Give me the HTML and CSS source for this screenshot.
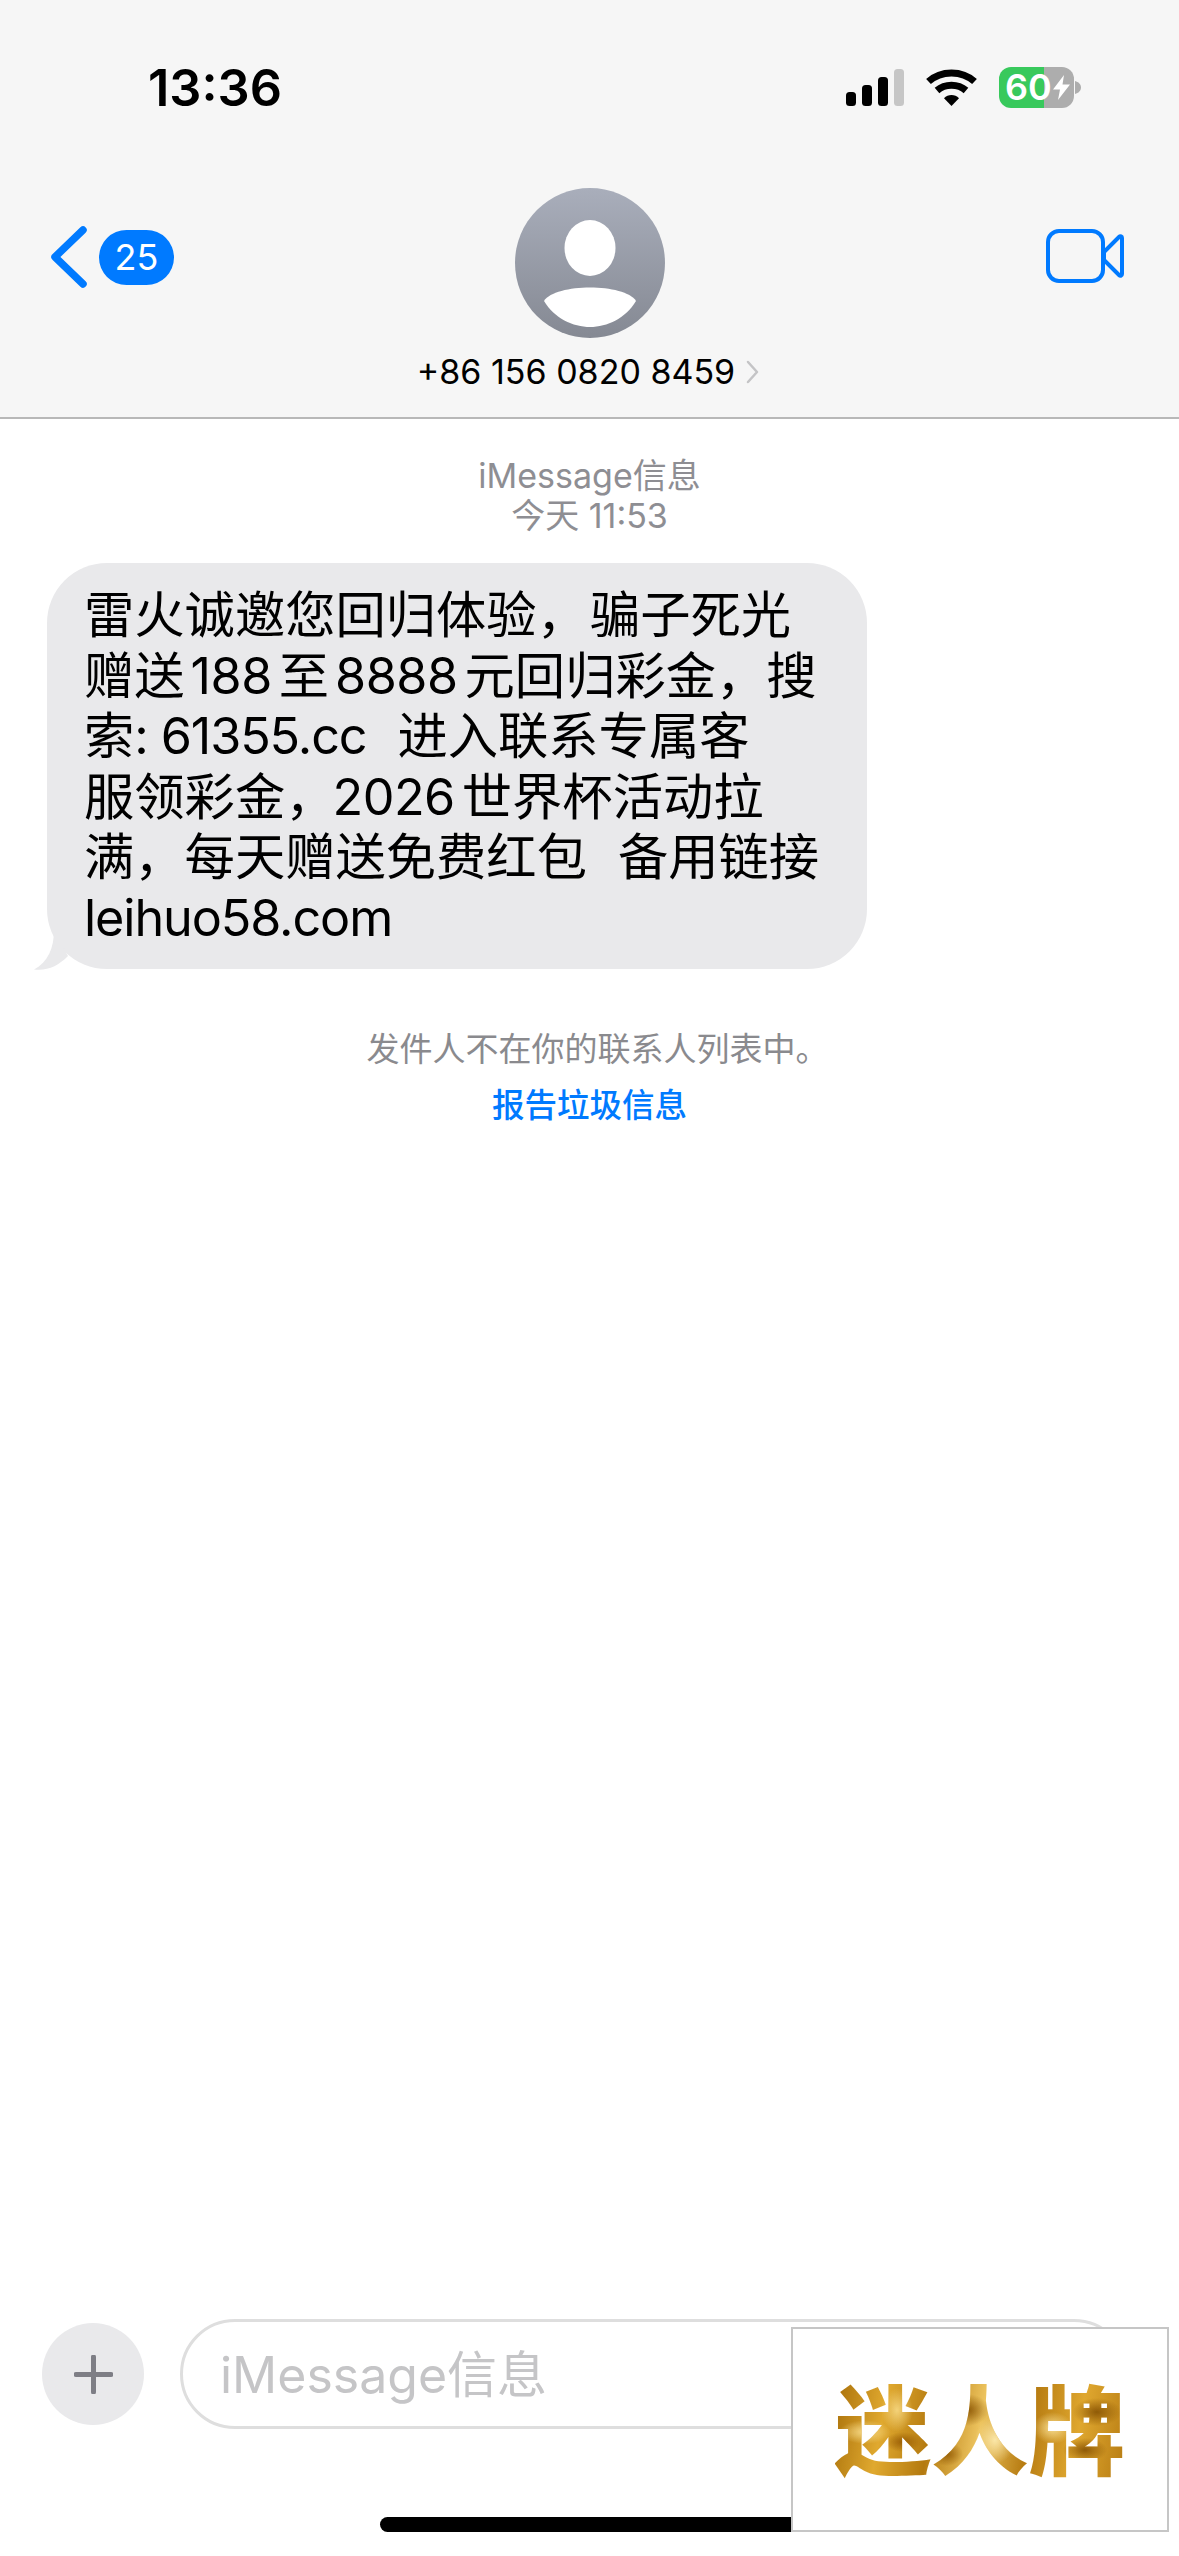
FILE: index.html
```html
<!DOCTYPE html>
<html lang="zh-CN">
<head>
<meta charset="utf-8">
<title>iMessage</title>
<link rel="stylesheet" href="styles.css">
</head>
<body>
<div class="screen">
  <header class="top">
    <div class="status">
      <span class="time">13:36</span>
      <div class="status-icons">
        <svg class="signal" width="58" height="37" viewBox="0 0 58 37">
          <rect x="0" y="23" width="10" height="14" rx="3.5" fill="#000"/>
          <rect x="16" y="16" width="10" height="21" rx="3.5" fill="#000"/>
          <rect x="32" y="8" width="10" height="29" rx="3.5" fill="#000"/>
          <rect x="48" y="0" width="10" height="37" rx="3.5" fill="#c6c6c6"/>
        </svg>
        <svg class="wifi" width="51" height="37" viewBox="0 0 51 37">
          <path d="M2.5 12.5C15 1 36 1 48.5 12.5" fill="none" stroke="#000" stroke-width="7"/>
          <path d="M11 21.5C19 14.5 32 14.5 40 21.5" fill="none" stroke="#000" stroke-width="7"/>
          <path d="M25.5 37L18 29.2C22 25 29 25 33 29.2Z" fill="#000"/>
        </svg>
        <div class="battery">
          <div class="battery-body">
            <span class="battery-num">60</span>
            <svg class="bolt" width="17" height="25" viewBox="0 0 17 25">
              <path d="M11 0L0 14.500H7L5 25L17 9.500H9.500Z" fill="#fff"/>
            </svg>
          </div>
          <svg class="nub" width="6" height="13" viewBox="0 0 6 13">
            <path d="M0 0C3.500 .8 6 3.500 6 6.500S3.500 12.200 0 13Z" fill="#adadad"/>
          </svg>
        </div>
      </div>
    </div>
    <div class="nav">
      <div class="back">
        <svg width="38" height="64" viewBox="0 0 38 64">
          <path d="M33 5L5 32L33 59" fill="none" stroke="#007aff" stroke-width="7.500" stroke-linecap="round" stroke-linejoin="round"/>
        </svg>
        <span class="badge">25</span>
      </div>
      <div class="contact">
        <svg class="avatar" width="150" height="150" viewBox="0 0 150 150">
          <defs>
            <linearGradient id="av" x1="0" y1="0" x2="0" y2="1">
              <stop offset="0" stop-color="#a9aebb"/>
              <stop offset="1" stop-color="#858993"/>
            </linearGradient>
          </defs>
          <circle cx="75" cy="75" r="75" fill="url(#av)"/>
          <ellipse cx="75" cy="60" rx="25.500" ry="28" fill="#fff"/>
          <path d="M29 113C40 95 110 95 121 113C111 130 92 139 75 139C58 139 39 130 29 113Z" fill="#fff"/>
        </svg>
        <div class="number">
          <span>+86 156 0820 8459</span>
          <svg width="13" height="24" viewBox="0 0 13 24">
            <path d="M2 2L11 12L2 22" fill="none" stroke="#c4c4c6" stroke-width="2.500" stroke-linecap="round" stroke-linejoin="round"/>
          </svg>
        </div>
      </div>
      <div class="video">
        <svg width="78" height="54" viewBox="0 0 78 54">
          <rect x="2" y="2" width="55" height="50" rx="11" fill="none" stroke="#007aff" stroke-width="4"/>
          <path d="M58 23L73 8C74.500 6.500 76 7.500 76 9V45C76 46.500 74.500 47.500 73 46L58 31Z" fill="none" stroke="#007aff" stroke-width="4" stroke-linejoin="round"/>
        </svg>
      </div>
    </div>
  </header>

  <main class="thread">
    <div class="stamp">
      <div>iMessage信息</div>
      <div>今天 11:53</div>
    </div>
    <div class="bubble">
      <svg class="tail" width="34" height="40" viewBox="0 0 34 40">
        <path d="M20 0C20 18 14 32 0 39.500C14 41 24 36 34 26Z" fill="#e9e9eb"/>
      </svg>
      <div class="line">雷火诚邀您回归体验，<span class="nudge"></span>骗子死光</div>
      <div class="line">赠送<span class="gap">188</span>至<span class="gap">8888</span>元回归彩金，搜</div>
      <div class="line">索<span class="en">: 61355.cc</span><span class="wide"></span>进入联系专属客</div>
      <div class="line">服领彩金，<span class="gap gap-tight">2026</span>世界杯活动拉</div>
      <div class="line">满，每天赠送免费红包<span class="wide"></span>备用链接</div>
      <div class="line"><span class="en">leihuo58.com</span></div>
    </div>
    <div class="notice">发件人不在你的联系人列表中。</div>
    <div class="report">报告垃圾信息</div>
  </main>

  <footer class="bottom">
    <div class="composer">
      <div class="plus">
        <svg width="39" height="39" viewBox="0 0 39 39">
          <path d="M19.500 2V37M2 19.500H37" fill="none" stroke="#7e7e85" stroke-width="5" stroke-linecap="round"/>
        </svg>
      </div>
      <div class="input">iMessage信息</div>
    </div>
    <div class="home"></div>
  </footer>

  <div class="brand"><span class="brand-text">迷人牌</span></div>
</div>
</body>
</html>
```
FILE: styles.css
```css
* { box-sizing: border-box; }
html, body { margin: 0; padding: 0; background: #fff; }
body {
  font-family: Inter, "Noto Sans CJK SC", sans-serif;
  color: #000;
}
.screen {
  position: relative;
  width: 1179px;
  height: 2556px;
  display: flex;
  flex-direction: column;
  overflow: hidden;
  background: #fff;
}
.top {
  height: 419px;
  background: #f6f6f6;
  border-bottom: 2px solid #b8b8b8;
  display: flex;
  flex-direction: column;
}
.status {
  height: 188px;
  padding: 67px 98px 0 148px;
  display: flex;
  justify-content: space-between;
  align-items: flex-start;
}
.time {
  font-size: 50.500px;
  font-weight: 600;
  line-height: 41px;
}
.status-icons {
  display: flex;
  align-items: flex-start;
  gap: 22px;
  padding-top: 2px;
}
.battery {
  display: flex;
  align-items: center;
  margin-top: -2px;
}
.battery-body {
  width: 75px;
  height: 41px;
  border-radius: 12px;
  background: linear-gradient(90deg, #38c95c 0, #38c95c 45px, #adadad 45px, #adadad 100%);
  display: flex;
  align-items: center;
  padding-left: 6px;
  gap: 3px;
}
.battery-num {
  color: #fff;
  font-size: 36px;
  font-weight: 600;
  line-height: 41px;
  width: 45px;
}
.nub { margin-left: 1px; }
.nav {
  display: grid;
  grid-template-columns: 1fr auto 1fr;
  padding: 0 50px;
}
.back {
  display: flex;
  align-items: center;
  gap: 11px;
  align-self: start;
  margin-top: 37px;
}
.badge {
  width: 75px;
  height: 55px;
  border-radius: 28px;
  background: #007aff;
  color: #fff;
  font-size: 36px;
  line-height: 55px;
  text-align: center;
}
.contact {
  display: flex;
  flex-direction: column;
  align-items: center;
}
.avatar { display: block; }
.number {
  display: flex;
  align-items: center;
  gap: 11px;
  margin-top: 14px;
  padding-right: 3px;
  font-size: 34px;
  line-height: 40px;
  white-space: nowrap;
}
.video {
  justify-self: end;
  margin: 41px 5px 0 0;
}
.video svg { display: block; }

.thread {
  display: flex;
  flex-direction: column;
  align-items: center;
}
.stamp {
  margin-top: 37px;
  font-size: 34px;
  line-height: 40px;
  color: #8e8e93;
  text-align: center;
}
.bubble {
  position: relative;
  align-self: flex-start;
  width: 820px;
  height: 406px;
  margin: 27px 0 0 47px;
  padding: 22px 20px 20px 37px;
  background: #e9e9eb;
  border-radius: 60px;
  font-size: 50.300px;
  line-height: 60.500px;
  white-space: nowrap;
}
.tail {
  position: absolute;
  left: -13px;
  bottom: -1px;
}
.en { letter-spacing: -1.100px; }
.gap { margin: 0 7px 0 6px; letter-spacing: -.500px; }
.gap-tight { margin-left: -3px; }
.nudge { display: inline-block; width: 3px; }
.wide { display: inline-block; width: 31px; }
.notice {
  margin-top: 60px;
  margin-left: 16px;
  font-size: 33px;
  line-height: 40px;
  color: #8a8a8e;
}
.report {
  margin-top: 17px;
  font-size: 32.500px;
  line-height: 40px;
  font-weight: 500;
  color: #007aff;
}

.bottom {
  margin-top: auto;
  display: flex;
  flex-direction: column;
  align-items: center;
  padding-bottom: 24px;
}
.composer {
  width: 100%;
  display: flex;
  align-items: center;
  gap: 36px;
  padding: 0 50px 0 42px;
}
.plus {
  flex: none;
  width: 102px;
  height: 102px;
  border-radius: 50%;
  background: #e9e9eb;
  display: flex;
  align-items: center;
  justify-content: center;
}
.input {
  flex: 1;
  height: 110px;
  border: 3px solid #dedede;
  border-radius: 55px;
  padding-left: 37px;
  font-size: 50px;
  line-height: 107px;
  color: #c5c5c7;
}
.home {
  width: 420px;
  height: 15px;
  margin-top: 88px;
  border-radius: 8px;
  background: #000;
}
.brand {
  position: absolute;
  left: 791px;
  top: 2327px;
  width: 378px;
  height: 205px;
  background: #fff;
  border: 2px solid #c6c6c6;
  display: flex;
  justify-content: center;
  padding-top: 41px;
}
.brand-text {
  font-family: "Noto Sans CJK SC", sans-serif;
  font-size: 97px;
  font-weight: 900;
  line-height: 110px;
  height: 110px;
  color: transparent;
  background-image:
    radial-gradient(ellipse 26px 12px at 30px 62px, #f6d987, transparent),
    radial-gradient(ellipse 16px 22px at 62px 40px, #f3d27a, transparent),
    radial-gradient(ellipse 18px 10px at 68px 72px, #9a5f06, transparent),
    radial-gradient(ellipse 22px 16px at 132px 40px, #8f5a07, transparent),
    radial-gradient(ellipse 20px 24px at 160px 70px, #fbe7a8, transparent),
    radial-gradient(ellipse 16px 12px at 112px 84px, #99620a, transparent),
    radial-gradient(ellipse 20px 16px at 218px 58px, #f8dd90, transparent),
    radial-gradient(ellipse 24px 14px at 262px 42px, #8f5a07, transparent),
    radial-gradient(ellipse 22px 12px at 250px 80px, #8f5a07, transparent),
    linear-gradient(100deg, #a66d08 0%, #e0a92f 18%, #b47a10 34%, #edc45f 50%, #b77c12 66%, #dfa72f 82%, #b57a12 100%);
  -webkit-background-clip: text;
  background-clip: text;
}
```
